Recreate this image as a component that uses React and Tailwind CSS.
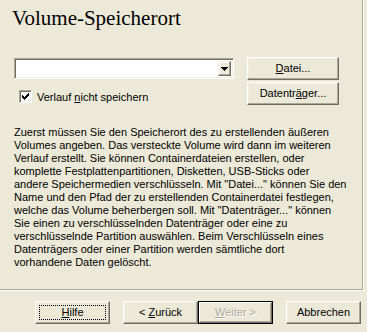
import React from 'react';

// classic XP-era control styles
const raised =
    'border border-t-white border-l-white border-r-[#716f64] border-b-[#716f64] shadow-[inset_-1px_-1px_0_#aca899,inset_1px_1px_0_#f1efe2] bg-[#ece9d8]';
const sunken =
    'border border-t-[#aca899] border-l-[#aca899] border-r-white border-b-white shadow-[inset_1px_1px_0_#716f64,inset_-1px_-1px_0_#f1efe2]';

const Btn = ({ children, className = '', w = 'w-[75px]' }) => (
    <div className={`${w} h-[23px] ${raised} flex items-center justify-center ${className}`}>
        {children}
    </div>
);

const CheckMark = () => (
    <svg width="7" height="7" viewBox="0 0 7 7" shapeRendering="crispEdges">
        <path d="M0 2h1v1h1v1h1V3h1V2h1V1h1V0h1v3H6v1H5v1H4v1H3v1H2V6H1V5H0z" fill="#000" />
    </svg>
);

const App = () => {
    return (
        <div className="w-[367px] h-[332px] bg-[#ece9d8] text-black overflow-hidden font-['Liberation_Sans',Arial,sans-serif]">
            {/* Wizard-Seite mit eingeätztem Rahmen */}
            <div className="w-[364px] h-[291px] border-r border-b border-white">
                <div className="w-[363px] h-[290px] border-r border-b border-[#aca899] flex flex-col">
                    <div className="pt-[6px] pl-[12px] text-[21px] leading-[24px] font-['DejaVu_Serif','Liberation_Serif',serif]">
                        <span className="font-['Liberation_Serif','Times_New_Roman','DejaVu_Serif',serif]">Volume-Speicherort</span>
                    </div>

                    {/* Pfad + Datei */}
                    <div className="flex items-start mt-[27px] text-[11px] leading-[13px]">
                        <div className={`ml-[14px] mt-[1px] w-[220px] h-[21px] bg-white ${sunken} flex justify-end p-[2px]`}>
                            <div className="w-[13px] h-[15px] border border-t-[#f1efe2] border-l-[#f1efe2] border-r-[#716f64] border-b-[#716f64] shadow-[inset_-1px_-1px_0_#aca899,inset_1px_1px_0_#fff] bg-[#ece9d8] flex items-center justify-center">
                                <svg width="7" height="4" viewBox="0 0 7 4" shapeRendering="crispEdges">
                                    <path d="M0 0h7v1H6v1H5v1H4v1H3V3H2V2H1V1H0z" fill="#000" />
                                </svg>
                            </div>
                        </div>
                        <Btn w="w-[92px]" className="ml-[13px]">
                            <span><span className="underline">D</span>atei...</span>
                        </Btn>
                    </div>

                    {/* Verlauf + Datenträger */}
                    <div className="flex items-start mt-[2px] text-[11px] leading-[13px]">
                        <div className="w-[233px] flex items-start">
                            <div className={`ml-[19px] mt-[8px] w-[13px] h-[13px] bg-white ${sunken} flex items-center justify-center`}>
                                <CheckMark />
                            </div>
                            <span className="ml-[5px] mt-[9px] whitespace-nowrap">
                                Verlauf <span className="underline">n</span>icht speichern
                            </span>
                        </div>
                        <Btn w="w-[92px]" className="ml-[14px]">
                            <span>Datentr<span className="underline">ä</span>ger...</span>
                        </Btn>
                    </div>

                    <p className="mt-[21px] pl-[14px] text-[11px] leading-[13px] whitespace-nowrap">
                        Zuerst müssen Sie den Speicherort des zu erstellenden äußeren<br />
                        Volumes angeben. Das versteckte Volume wird dann im weiteren<br />
                        Verlauf erstellt. Sie können Containerdateien erstellen, oder<br />
                        komplette Festplattenpartitionen, Disketten, USB-Sticks oder<br />
                        andere Speichermedien verschlüsseln. Mit "Datei..." können Sie den<br />
                        Name und den Pfad der zu erstellenden Containerdatei festlegen,<br />
                        welche das Volume beherbergen soll. Mit "Datenträger..." können<br />
                        Sie einen zu verschlüsselnden Datenträger oder eine zu<br />
                        verschlüsselnde Partition auswählen. Beim Verschlüsseln eines<br />
                        Datenträgers oder einer Partition werden sämtliche dort<br />
                        vorhandene Daten gelöscht.
                    </p>
                </div>
            </div>

            {/* Navigationsknöpfe */}
            <div className="flex mt-[10px] text-[11px] leading-[13px]">
                <Btn className="ml-[35px] relative">
                    <span className="absolute inset-[3px] border border-dotted border-black" />
                    <span><span className="underline">H</span>ilfe</span>
                </Btn>
                <Btn className="ml-[13px]">
                    <span>&lt; <span className="underline">Z</span>urück</span>
                </Btn>
                <div className="border border-black">
                    <div className="w-[73px] h-[21px] border border-t-white border-l-white border-r-[#716f64] border-b-[#716f64] shadow-[inset_-1px_-1px_0_#aca899] flex items-center justify-center text-[#aca899] [text-shadow:1px_1px_0_#fff]">
                        <span><span className="underline">W</span>eiter &gt;</span>
                    </div>
                </div>
                <Btn className="ml-[13px]">
                    <span>Abbrechen</span>
                </Btn>
            </div>
        </div>
    );
};

export default App;
